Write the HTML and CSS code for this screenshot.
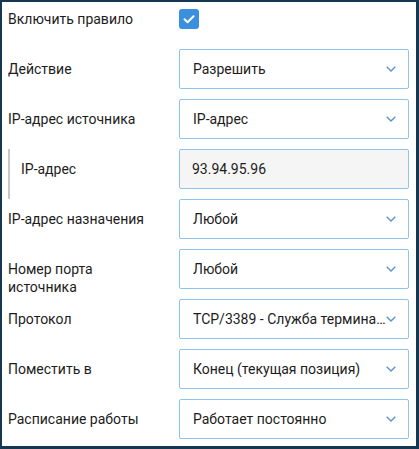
FILE: index.html
```html
<!DOCTYPE html>
<html lang="ru">
<head>
<meta charset="utf-8">
<title>Правило</title>
<link rel="stylesheet" href="styles.css">
</head>
<body>
<div class="panel">
  <div class="row row-first">
    <div class="label">Включить правило</div>
    <div class="control">
      <span class="checkbox">
        <svg width="20" height="20" viewBox="0 0 20 20"><path d="M5.5 10.2 L8.6 13.2 L14.5 7.2" fill="none" stroke="#fff" stroke-width="2" stroke-linecap="round" stroke-linejoin="round"/></svg>
      </span>
    </div>
  </div>

  <div class="row">
    <div class="label">Действие</div>
    <div class="control"><div class="select"><span class="value">Разрешить</span><svg class="chev" width="10" height="6" viewBox="0 0 10 6"><path d="M0.7 0.7 L5 5 L9.3 0.7" fill="none" stroke="#5d93cf" stroke-width="1.4"/></svg></div></div>
  </div>

  <div class="row">
    <div class="label">IP-адрес источника</div>
    <div class="control"><div class="select"><span class="value">IP-адрес</span><svg class="chev" width="10" height="6" viewBox="0 0 10 6"><path d="M0.7 0.7 L5 5 L9.3 0.7" fill="none" stroke="#5d93cf" stroke-width="1.4"/></svg></div></div>
  </div>

  <div class="row row-sub">
    <div class="label label-sub">IP-адрес</div>
    <div class="control"><div class="input">93.94.95.96</div></div>
  </div>

  <div class="row">
    <div class="label">IP-адрес назначения</div>
    <div class="control"><div class="select"><span class="value">Любой</span><svg class="chev" width="10" height="6" viewBox="0 0 10 6"><path d="M0.7 0.7 L5 5 L9.3 0.7" fill="none" stroke="#5d93cf" stroke-width="1.4"/></svg></div></div>
  </div>

  <div class="row">
    <div class="label">Номер порта источника</div>
    <div class="control"><div class="select"><span class="value">Любой</span><svg class="chev" width="10" height="6" viewBox="0 0 10 6"><path d="M0.7 0.7 L5 5 L9.3 0.7" fill="none" stroke="#5d93cf" stroke-width="1.4"/></svg></div></div>
  </div>

  <div class="row">
    <div class="label">Протокол</div>
    <div class="control"><div class="select"><span class="value">TCP/3389 - Служба терминалов</span><svg class="chev" width="10" height="6" viewBox="0 0 10 6"><path d="M0.7 0.7 L5 5 L9.3 0.7" fill="none" stroke="#5d93cf" stroke-width="1.4"/></svg></div></div>
  </div>

  <div class="row">
    <div class="label">Поместить в</div>
    <div class="control"><div class="select"><span class="value">Конец (текущая позиция)</span><svg class="chev" width="10" height="6" viewBox="0 0 10 6"><path d="M0.7 0.7 L5 5 L9.3 0.7" fill="none" stroke="#5d93cf" stroke-width="1.4"/></svg></div></div>
  </div>

  <div class="row">
    <div class="label">Расписание работы</div>
    <div class="control"><div class="select"><span class="value">Работает постоянно</span><svg class="chev" width="10" height="6" viewBox="0 0 10 6"><path d="M0.7 0.7 L5 5 L9.3 0.7" fill="none" stroke="#5d93cf" stroke-width="1.4"/></svg></div></div>
  </div>
</div>
</body>
</html>
```

FILE: styles.css
```css
html, body {
  margin: 0;
  padding: 0;
}
body {
  background: #16374f;
  font-family: Roboto, "Liberation Sans", sans-serif;
  font-size: 14px;
  color: #1c1c1c;
  width: 419px;
  height: 449px;
  overflow: hidden;
}
.panel {
  margin: 2px 3px 3px 2px;
  height: 444px;
  background: #ffffff;
  box-sizing: border-box;
  padding: 0 7px 0 6px;
}
.row {
  display: flex;
  align-items: flex-start;
  height: 40px;
  margin-bottom: 10px;
}
.row-first {
  height: 37px;
  margin-bottom: 10px;
}
.label {
  flex: 0 0 150px;
  margin-right: 21px;
  padding-top: 11px;
  line-height: 18px;
}
.row-first .label {
  padding-top: 8px;
}
.control {
  flex: 0 0 230px;
  width: 230px;
}
.row-first .control {
  padding-top: 7px;
}
.checkbox {
  display: block;
  width: 20px;
  height: 20px;
  border-radius: 3px;
  background: #3a8fdf;
}
.checkbox svg {
  display: block;
}
.select, .input {
  box-sizing: border-box;
  height: 40px;
  border: 1px solid #8ec3ee;
  border-radius: 2px;
  line-height: 18px;
  padding: 10px 0 10px 13px;
}
.select {
  display: flex;
  align-items: center;
  background: #fff;
  padding-right: 12px;
}
.select .value {
  flex: 1 1 auto;
  min-width: 0;
  white-space: nowrap;
  overflow: hidden;
  text-overflow: ellipsis;
}
.chev {
  flex: 0 0 10px;
  display: block;
}
.input {
  background: #f5f5f5;
  padding-left: 12px;
}
.row-sub {
  margin-bottom: 0;
  padding-bottom: 10px;
  border-left: 2px solid #c8c8c8;
}
.row-sub .label {
  flex: 0 0 137px;
  padding-left: 11px;
  margin-right: 21px;
}
```
